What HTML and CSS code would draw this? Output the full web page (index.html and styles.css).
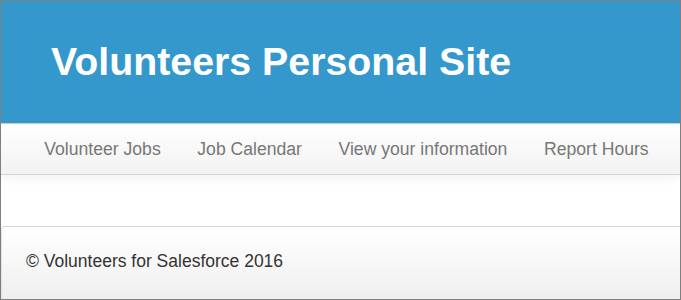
FILE: index.html
```html
<!DOCTYPE html>
<html>
<head>
<meta charset="utf-8">
<link rel="stylesheet" href="styles.css">
</head>
<body>
<div class="frame">
  <header class="masthead">
    <h1 class="title">Volunteers Personal Site</h1>
  </header>
  <nav class="navbar">
    <a class="nav-link" href="#">Volunteer Jobs</a>
    <a class="nav-link" href="#">Job Calendar</a>
    <a class="nav-link" href="#">View your information</a>
    <a class="nav-link" href="#">Report Hours</a>
  </nav>
  <main class="content"></main>
  <footer class="footer">© Volunteers for Salesforce 2016</footer>
</div>
</body>
</html>
```

FILE: styles.css
```css
html, body {
  margin: 0;
  padding: 0;
  background: #ffffff;
}
.frame {
  width: 681px;
  height: 300px;
  box-sizing: border-box;
  border: 1px solid #7f7f7f;
  display: flex;
  flex-direction: column;
  overflow: hidden;
  font-family: "Liberation Sans", Arial, sans-serif;
}
.masthead {
  background: #3498cc;
  height: 123px;
  box-sizing: border-box;
  padding: 41px 0 0 50px;
  border-bottom: 1px solid #c9d3d9;
}
.title {
  margin: 0;
  color: #ffffff;
  font-size: 39.3px;
  line-height: 39px;
  font-weight: bold;
}
.navbar {
  display: flex;
  height: 50px;
  padding-left: 25px;
  background: linear-gradient(to bottom, #ffffff 0%, #f2f2f2 100%);
  border-bottom: 1px solid #d6d6d6;
  box-shadow: 0 4px 10px rgba(0, 0, 0, 0.05);
  position: relative;
  z-index: 1;
}
.nav-link {
  padding: 15px 18.3px;
  line-height: 20px;
  font-size: 17.6px;
  color: #777777;
  text-decoration: none;
}
.content {
  height: 51px;
  background: #ffffff;
}
.footer {
  flex: 1;
  border-top: 1px solid #d4d4d4;
  border-left: 1px solid #e2e2e2;
  border-top-left-radius: 4px;
  background: linear-gradient(to bottom, #ffffff 0%, #efefef 100%);
  padding: 24px 0 0 24px;
  font-size: 17.5px;
  line-height: 20px;
  color: #333333;
}
```
